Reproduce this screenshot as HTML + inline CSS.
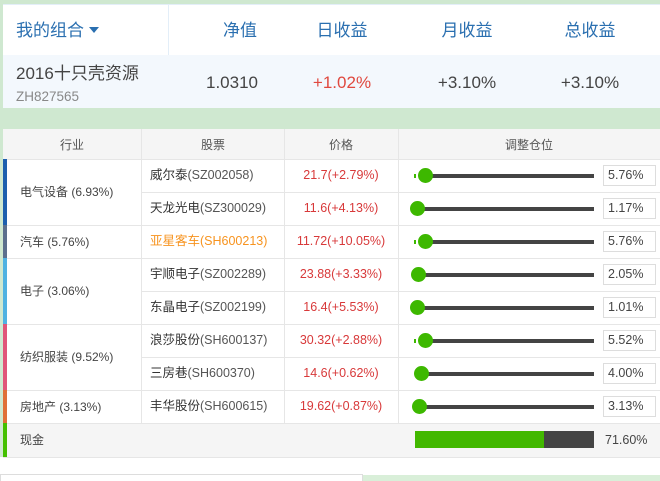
<!DOCTYPE html>
<html><head><meta charset="utf-8"><style>
*{margin:0;padding:0;box-sizing:border-box}
body{width:660px;height:481px;overflow:hidden;background:#cfe8d0;font-family:"Liberation Sans","Noto Sans CJK SC",sans-serif;position:relative}
div,span{position:absolute}
.c{text-align:center;transform:translateX(-50%);white-space:nowrap}
.h{color:#2a6fb0;font-size:17px;top:21px;line-height:20px}
.v{color:#444;font-size:17px;top:73px;line-height:20px}
.hl{position:absolute;left:3px;right:0;height:1px;background:#e6e6e6}
.vl{position:absolute;width:1px;background:#e6e6e6}
.ind{left:20px;font-size:12px;color:#444;line-height:16px}
.st{left:150px;font-size:12.5px;color:#555;line-height:16px;white-space:nowrap}
.st b{font-weight:normal;color:#333}
.pr{left:341px;font-size:12.5px;color:#d8393a;line-height:16px}
.bar{left:3px;width:4px}
.trk{left:420px;width:174px;height:4px;background:#444}
.kn{width:15px;height:15px;border-radius:50%;background:#3db800}
.dot{width:2px;height:4px;background:#3db800;left:414px}
.inp{left:603px;width:53px;height:21px;border:1px solid #ddd;background:#fff;font-size:12.5px;color:#444;padding:0 0 0 4px;line-height:19px}
</style></head><body>
<div style="left:3px;top:4px;width:657px;height:51px;background:#fff;border-top:1px solid #e3eef8"></div>
<div style="left:168px;top:4px;width:1px;height:51px;background:#e3eef8"></div>
<div style="left:3px;top:55px;width:657px;height:53px;background:#f3f8fd"></div>
<div style="left:16px;top:21px;font-size:17px;line-height:20px;color:#2a6fb0;white-space:nowrap">我的组合<span style="position:relative;display:inline-block;margin-left:5px;top:-3px;border-left:5px solid transparent;border-right:5px solid transparent;border-top:6px solid #2a6fb0"></span></div>
<div class="c h" style="left:240px">净值</div>
<div class="c h" style="left:342px">日收益</div>
<div class="c h" style="left:467px">月收益</div>
<div class="c h" style="left:590px">总收益</div>
<div style="left:16px;top:64px;font-size:17px;line-height:20px;color:#444">2016十只壳资源</div>
<div style="left:16px;top:89px;font-size:13.5px;line-height:16px;color:#888">ZH827565</div>
<div class="c v" style="left:232px">1.0310</div>
<div class="c v" style="left:342px;color:#e0493f">+1.02%</div>
<div class="c v" style="left:467px">+3.10%</div>
<div class="c v" style="left:590px">+3.10%</div>

<div style="left:3px;top:129px;width:657px;height:328px;background:#fff"></div>
<div style="left:3px;top:129px;width:657px;height:30px;background:#f5f5f5"></div>
<div style="left:3px;top:423px;width:657px;height:34px;background:#f5f5f5"></div>
<div style="left:0;top:457px;width:660px;height:18px;background:#fff"></div>
<div style="left:0;top:474px;width:363px;height:7px;border:1px solid #ddd;border-bottom:none;background:#fff"></div>
<div style="left:363px;top:475px;width:297px;height:6px;background:#d9efd9"></div>

<div class="c" style="left:72px;top:137px;font-size:12px;line-height:16px;color:#555">行业</div>
<div class="c" style="left:213px;top:137px;font-size:12px;line-height:16px;color:#555">股票</div>
<div class="c" style="left:341px;top:137px;font-size:12px;line-height:16px;color:#555">价格</div>
<div class="c" style="left:529px;top:137px;font-size:12px;line-height:16px;color:#555">调整仓位</div>

<div class="vl" style="left:141px;top:129px;height:294px"></div>
<div class="vl" style="left:284px;top:129px;height:294px"></div>
<div class="vl" style="left:398px;top:129px;height:294px"></div>
<div class="hl" style="top:159px"></div>
<div class="hl" style="top:192px;left:141px"></div>
<div class="hl" style="top:225px"></div>
<div class="hl" style="top:258px"></div>
<div class="hl" style="top:291px;left:141px"></div>
<div class="hl" style="top:324px"></div>
<div class="hl" style="top:357px;left:141px"></div>
<div class="hl" style="top:390px"></div>
<div class="hl" style="top:423px"></div>
<div class="hl" style="top:457px"></div>

<div class="bar" style="top:159px;height:66px;background:#1d5fae"></div>
<div class="bar" style="top:225px;height:33px;background:#5c6f8d"></div>
<div class="bar" style="top:258px;height:66px;background:#4fb2e2"></div>
<div class="bar" style="top:324px;height:66px;background:#e05579"></div>
<div class="bar" style="top:390px;height:33px;background:#e07038"></div>
<div class="bar" style="top:423px;height:34px;background:#44c000"></div>

<div class="ind" style="top:184px">电气设备 (6.93%)</div>
<div class="ind" style="top:234px">汽车 (5.76%)</div>
<div class="ind" style="top:283px">电子 (3.06%)</div>
<div class="ind" style="top:349px">纺织服装 (9.52%)</div>
<div class="ind" style="top:399px">房地产 (3.13%)</div>
<div class="ind" style="top:432px">现金</div>

<div class="st" style="top:167px"><b>威尔泰</b>(SZ002058)</div>
<div class="st" style="top:200px"><b>天龙光电</b>(SZ300029)</div>
<div class="st" style="top:233px;color:#f7931e">亚星客车(SH600213)</div>
<div class="st" style="top:266px"><b>宇顺电子</b>(SZ002289)</div>
<div class="st" style="top:299px"><b>东晶电子</b>(SZ002199)</div>
<div class="st" style="top:332px"><b>浪莎股份</b>(SH600137)</div>
<div class="st" style="top:365px"><b>三房巷</b>(SH600370)</div>
<div class="st" style="top:398px"><b>丰华股份</b>(SH600615)</div>

<div class="c pr" style="top:167px">21.7(+2.79%)</div>
<div class="c pr" style="top:200px">11.6(+4.13%)</div>
<div class="c pr" style="top:233px">11.72(+10.05%)</div>
<div class="c pr" style="top:266px">23.88(+3.33%)</div>
<div class="c pr" style="top:299px">16.4(+5.53%)</div>
<div class="c pr" style="top:332px">30.32(+2.88%)</div>
<div class="c pr" style="top:365px">14.6(+0.62%)</div>
<div class="c pr" style="top:398px">19.62(+0.87%)</div>

<div class="trk" style="top:174px"></div><div class="dot" style="top:174px"></div><div class="kn" style="left:418px;top:168px"></div><div class="inp" style="top:165px">5.76%</div>
<div class="trk" style="top:207px"></div><div class="kn" style="left:410px;top:201px"></div><div class="inp" style="top:198px">1.17%</div>
<div class="trk" style="top:240px"></div><div class="dot" style="top:240px"></div><div class="kn" style="left:418px;top:234px"></div><div class="inp" style="top:231px">5.76%</div>
<div class="trk" style="top:273px"></div><div class="kn" style="left:411px;top:267px"></div><div class="inp" style="top:264px">2.05%</div>
<div class="trk" style="top:306px"></div><div class="kn" style="left:410px;top:300px"></div><div class="inp" style="top:297px">1.01%</div>
<div class="trk" style="top:339px"></div><div class="dot" style="top:339px"></div><div class="kn" style="left:418px;top:333px"></div><div class="inp" style="top:330px">5.52%</div>
<div class="trk" style="top:372px"></div><div class="kn" style="left:414px;top:366px"></div><div class="inp" style="top:363px">4.00%</div>
<div class="trk" style="top:405px"></div><div class="kn" style="left:412px;top:399px"></div><div class="inp" style="top:396px">3.13%</div>

<div style="left:415px;top:431px;width:179px;height:17px;background:#444"></div>
<div style="left:415px;top:431px;width:129px;height:17px;background:#42b800"></div>
<div style="left:605px;top:432px;font-size:12.5px;line-height:16px;color:#444">71.60%</div>
</body></html>
